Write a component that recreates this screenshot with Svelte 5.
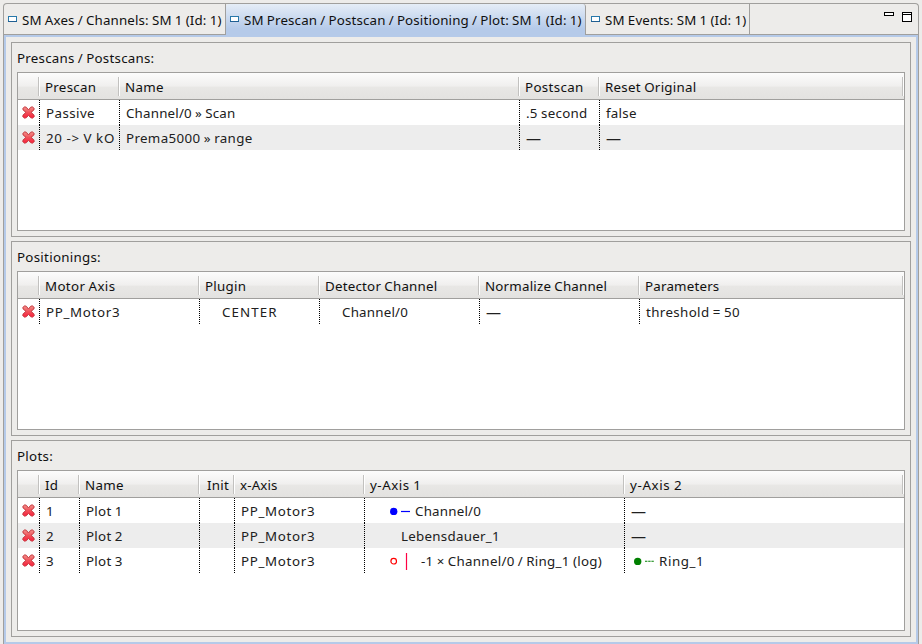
<script>
  const tabs = [
    { label: 'SM Axes / Channels: SM 1 (Id: 1)', width: 222 },
    { label: 'SM Prescan / Postscan / Positioning / Plot: SM 1 (Id: 1)', width: 360, active: true },
    { label: 'SM Events: SM 1 (Id: 1)', width: 164 }
  ];

  const groups = [
    {
      title: 'Prescans / Postscans:',
      height: 195,
      widths: [80, 400, 80, 304],
      heads: ['Prescan', 'Name', 'Postscan', 'Reset Original'],
      rows: [
        ['Passive', 'Channel/0 » Scan', '.5 second', 'false'],
        ['20 -> V kO', 'Prema5000 » range', '—', '—']
      ]
    },
    {
      title: 'Positionings:',
      height: 195,
      widths: [160, 120, 160, 160, 264],
      heads: ['Motor Axis', 'Plugin', 'Detector Channel', 'Normalize Channel', 'Parameters'],
      rows: [
        ['PP_Motor3', { text: 'CENTER', indent: 16 }, { text: 'Channel/0', indent: 16 }, '—', 'threshold = 50']
      ]
    },
    {
      title: 'Plots:',
      height: 197,
      widths: [40, 120, 35, 130, 260, 279],
      heads: ['Id', 'Name', 'Init', 'x-Axis', 'y-Axis 1', 'y-Axis 2'],
      rows: [
        ['1', 'Plot 1', '', 'PP_Motor3', { text: 'Channel/0', indent: 2, mark: 'dot', line: 'solid', color: '#0000ff' }, '—'],
        ['2', 'Plot 2', '', 'PP_Motor3', { text: 'Lebensdauer_1', indent: 30 }, '—'],
        ['3', 'Plot 3', '', 'PP_Motor3',
          { text: '-1 × Channel/0 / Ring_1 (log)', indent: 8, mark: 'ring', line: 'bar', color: '#ff0000' },
          { text: 'Ring_1', indent: 2, mark: 'dot', line: 'dashed', color: '#008000' }]
      ]
    }
  ];

  // Letter spacing in px, for labels that differ from the default.
  const tracking = {
    Passive: 0.43, '20 -> V kO': 0.75, 'Prema5000 » range': 0.35, 'Channel/0 » Scan': 0.19,
    PP_Motor3: 0.67, CENTER: 1.1, 'threshold = 50': 0.37, 'Channel/0': 0.22,
    'Motor Axis': 0.35, Postscan: 0.35, 'Detector Channel': 0.22, 'Normalize Channel': 0.2,
    Parameters: 0.2, 'x-Axis': 0.15, 'y-Axis 1': 0.55, 'y-Axis 2': 0.65, Ring_1: 0.6,
    'Prescans / Postscans:': 0.24, '—': 0
  };
  const track = (t) => `${tracking[t] ?? 0.28}px`;

  const cell = (c) => (typeof c === 'string' ? { text: c, indent: 0 } : c);
</script>

{#snippet legend(c)}
  <svg class="legend" class:near={c.line === 'dashed'} width="24" height="25" viewBox="0 0 24 25">
    {#if c.mark === 'dot'}
      <circle cx="4.7" cy="13.4" r="3.7" fill={c.color} />
    {:else}
      <circle cx="4.7" cy="13.2" r="2.8" fill="none" stroke={c.color} stroke-width="1.2" />
    {/if}
    {#if c.line === 'solid'}
      <path d="M12 13.5h9" stroke={c.color} stroke-width="1.2" />
    {:else if c.line === 'dashed'}
      <path d="M12 13.3h9" stroke={c.color} stroke-width="1.1" stroke-dasharray="2.4 .8" />
    {:else}
      <path d="M17.5 5v17" stroke="#ff0044" stroke-width="1.2" />
    {/if}
  </svg>
{/snippet}

<div class="page">
  <div class="folder">
    <div class="tabs">
      {#each tabs as tab}
        <div class="tab" class:active={tab.active} style:width="{tab.width}px">
          <svg width="9" height="6" viewBox="0 0 9 6">
            <rect x=".5" y=".5" width="8" height="5" fill="#fff" stroke="#2878aa" />
            <path d="M0 5.5h9" stroke="#205f92" />
          </svg>
          <span>{tab.label}</span>
        </div>
      {/each}
      <svg class="tools" width="32" height="20" viewBox="0 0 32 20">
        <rect x="2.5" y="4.5" width="9" height="3" fill="#fff" stroke="#000" />
        <rect x="20.5" y="4.5" width="9" height="9" fill="#fff" stroke="#000" />
        <path d="M21 6.5h8" stroke="#000" />
      </svg>
    </div>
    <div class="content">
      {#each groups as group}
        <section style:height="{group.height}px">
          <h2 style:letter-spacing={track(group.title)}>{group.title}</h2>
          <div class="table">
            <div class="head">
              <div class="th icon"></div>
              {#each group.heads as label, i}
                <div class="th" class:init={label === 'Init'} style:width="{group.widths[i]}px" style:letter-spacing={track(label)}>{label}</div>
              {/each}
            </div>
            {#each group.rows as row}
              <div class="row">
                <div class="td icon">
                  <svg width="13" height="13" viewBox="0 0 13 13">
                    <defs>
                      <linearGradient id="red" x1="0" y1="0" x2="0" y2="1">
                        <stop offset="0" stop-color="#f2928c" />
                        <stop offset=".5" stop-color="#f0525a" />
                        <stop offset="1" stop-color="#fa1e3c" />
                      </linearGradient>
                    </defs>
                    <path
                      d="M2.8.8 4.5 1.4 6.5 4 8.5 1.4 10.2.8 12.2 2.4 11.8 4.1 9 6.4 11.8 8.8 12.3 10.6 10.3 12.2 8.5 11.6 6.5 9.2 4.5 11.6 2.7 12.2.7 10.6 1.2 8.8 4 6.4 1.2 4.1.8 2.4Z"
                      fill="url(#red)" stroke="#c5383f" stroke-width="1" stroke-linejoin="round" />
                  </svg>
                </div>
                {#each row as item, i}
                  {@const c = cell(item)}
                  <div class="td" style:width="{group.widths[i]}px">
                    {#if c.mark}{@render legend(c)}{/if}
                    <span class:none={c.text === '—'} style:margin-left="{c.indent}px" style:letter-spacing={track(c.text)}>{c.text}</span>
                  </div>
                {/each}
              </div>
            {/each}
          </div>
        </section>
      {/each}
    </div>
  </div>
</div>

<style>
  .page {
    box-sizing: border-box;
    width: 922px;
    height: 644px;
    overflow: hidden;
    padding: 3px 3px 0;
    background: #edecea;
    color: #101010;
    font: 13.333px/25px 'Noto Sans', sans-serif;
    word-spacing: -0.5px;
    white-space: nowrap;
  }
  .folder {
    box-sizing: border-box;
    height: 641px;
    border: 1px solid #a09f9d;
    border-bottom: 0;
    border-radius: 4px 4px 0 0;
    overflow: hidden;
  }
  .tabs {
    display: flex;
    height: 31px;
    box-shadow: inset 0 -1px #a09f9d;
  }
  .tab {
    box-sizing: border-box;
    display: flex;
    align-items: flex-start;
    padding: 4px 0 0 4px;
    border-right: 1px solid #a09f9d;
    letter-spacing: 0.15px;
  }
  .tab svg { margin: 8px 5px 0 0; flex: none; }
  .tab:nth-child(3) { padding-left: 5px; }
  .tab.active {
    background: linear-gradient(#e5edf7 0, #b5cae9 80%);
    border-radius: 3px 3px 0 0;
  }
  .tools { margin: 4px 4px 0 auto; }
  .content {
    box-sizing: border-box;
    height: 609px;
    display: flex;
    flex-direction: column;
    gap: 4px;
    padding: 5px;
    border: 2px solid #b5cae9;
  }
  section {
    box-sizing: border-box;
    flex: none;
    padding: 0 5px 5px;
    border: 1px solid #a09f9d;
    display: flex;
    flex-direction: column;
  }
  h2 { margin: 0; height: 29px; font: inherit; line-height: 30px; }
  .table {
    flex: 1;
    background: #fff;
    border: 1px solid #a09f9d;
    overflow: hidden;
  }
  .head {
    display: flex;
    height: 26px;
    border-bottom: 1px solid #a09f9d;
    background: linear-gradient(#fcfcfc, #f0efee 50%, #e8e7e5 55%, #e3e2e0);
  }
  .th, .td { box-sizing: border-box; flex: none; padding-left: 5px; }
  .th {
    line-height: 28px;
    background: linear-gradient(90deg, #c2c1bf 50%, #fff 50%) right 0 top 4px / 2px 19px no-repeat;
  }
  .th.init { padding-left: 7px; }
  .icon { width: 22px; }
  .row { display: flex; height: 25px; }
  .row:nth-child(odd) { background: #ededed; }
  .td {
    display: flex;
    padding-left: 6px;
    color: #202020;
    line-height: 26px;
    background: repeating-linear-gradient(#000 0 1px, transparent 1px 2px) right / 1px 25px no-repeat;
  }
  .td:last-child { background: none; }
  .td.icon { padding: 6px 0 0 4px; }
  .none { font-size: 15px; }
  .legend { margin-left: 18px; flex: none; }
  .legend.near { margin-left: 2px; }
</style>
